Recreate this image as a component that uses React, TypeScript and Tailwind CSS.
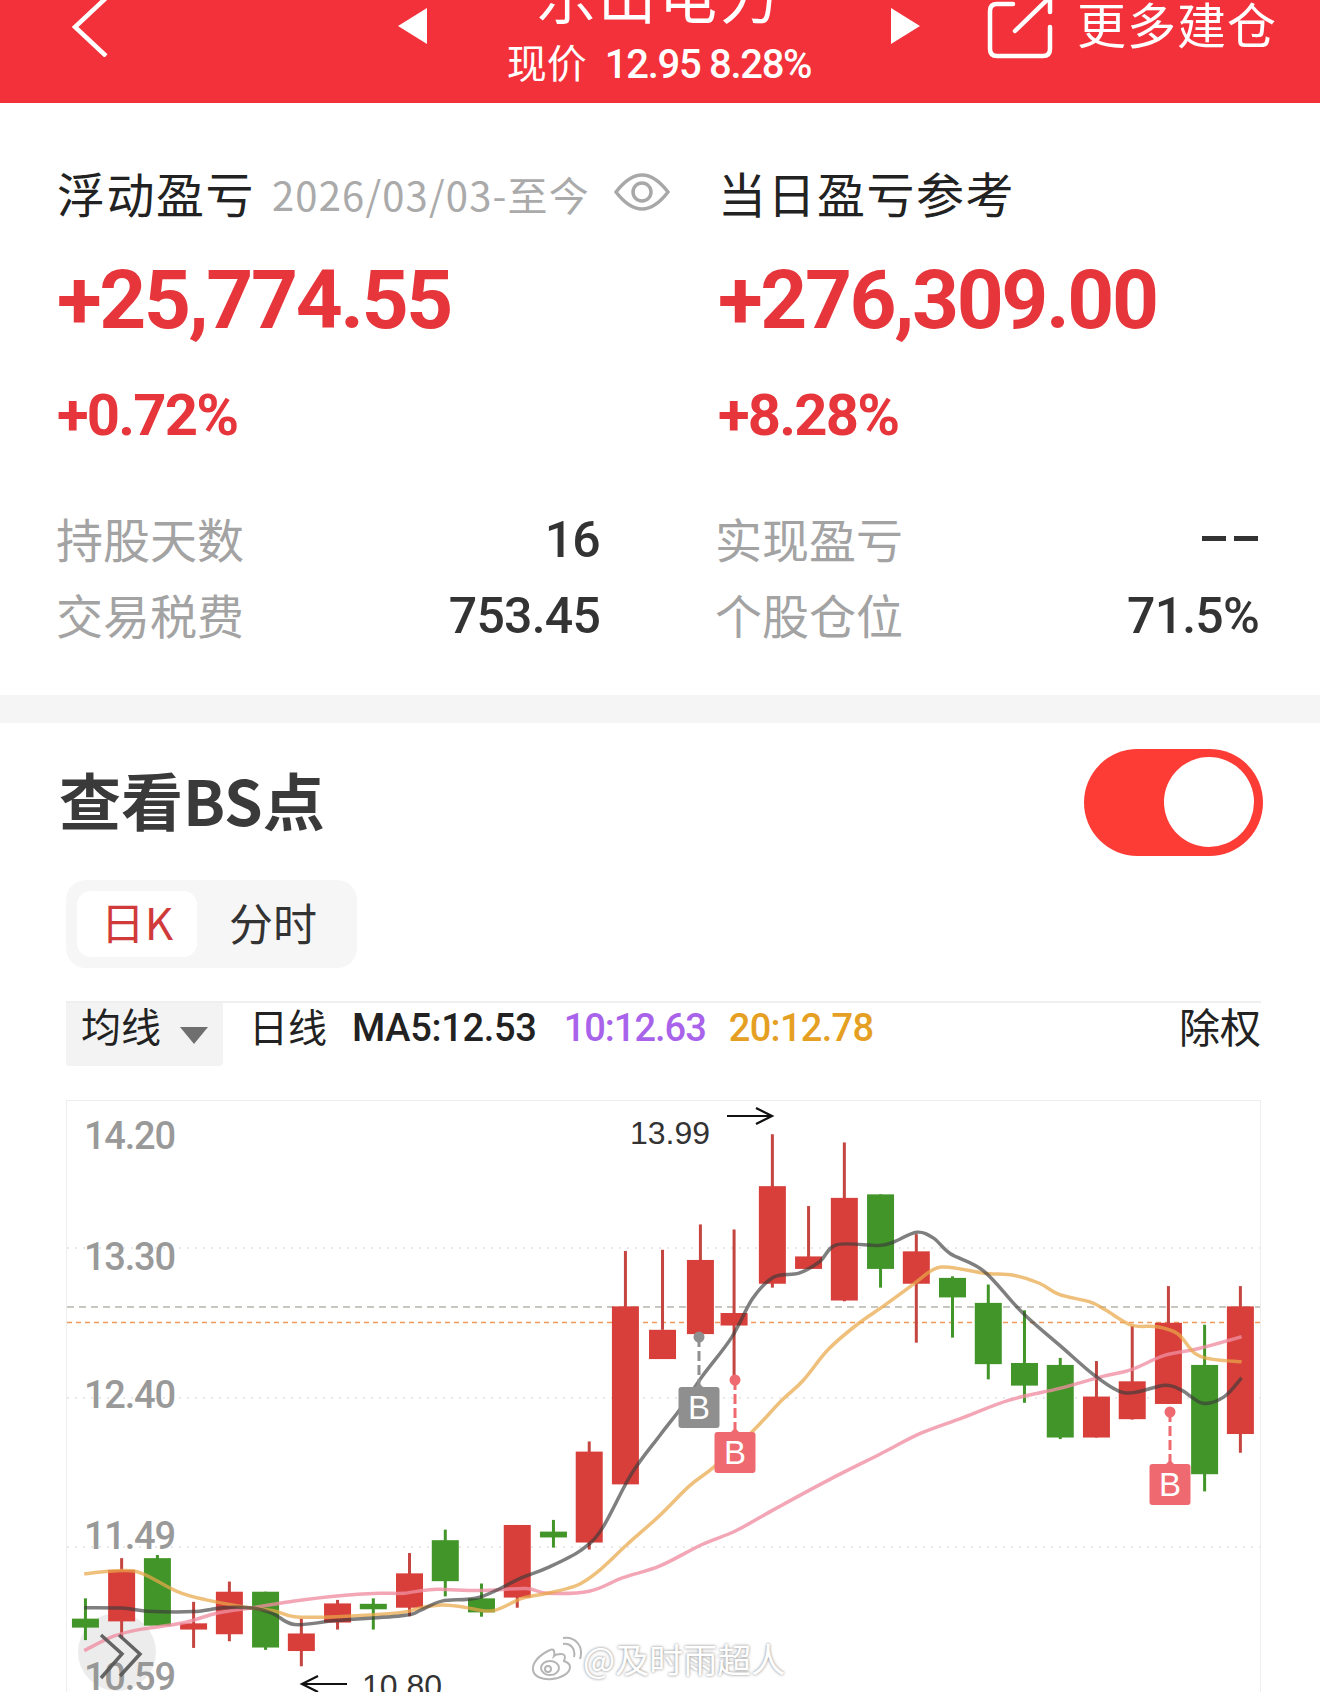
const L = (x: number, y: number): [number, number] => [x / 2.376, 1080 + y / 2.562];
const R = (x: number, y: number): [number, number] => [660 + x / 2.376, 1080 + y / 2.562];

type Candle = { x: number; top: number; bottom: number; hi: number; lo: number; up: boolean };

// measured from the left and right half of the chart, zoom coordinates
const leftCandles: [number, number, number, number, number, boolean][] = [
  [203, 1380, 1403, 1328, 1435, false],
  [289, 1255, 1387, 1225, 1430, true],
  [374, 1225, 1398, 1217, 1398, false],
  [460, 1392, 1408, 1337, 1455, true],
  [545, 1311, 1420, 1285, 1438, true],
  [631, 1311, 1454, 1311, 1460, false],
  [716, 1418, 1463, 1380, 1502, true],
  [802, 1341, 1390, 1332, 1408, true],
  [887, 1342, 1356, 1328, 1408, false],
  [973, 1264, 1352, 1212, 1374, true],
  [1058, 1179, 1284, 1152, 1323, false],
  [1144, 1328, 1364, 1290, 1375, false],
  [1229, 1140, 1326, 1140, 1352, true],
  [1315, 1157, 1172, 1127, 1198, false],
  [1400, 952, 1185, 926, 1203, true],
  [1486, 580, 1036, 438, 1036, true],
];
const rightCandles: [number, number, number, number, number, boolean][] = [
  [6, 640, 715, 435, 640, true],
  [96, 461, 651, 370, 651, true],
  [176, 597, 629, 383, 770, true],
  [267, 272, 522, 139, 532, true],
  [353, 452, 484, 323, 484, true],
  [438, 302, 565, 160, 567, true],
  [524, 293, 484, 293, 532, false],
  [609, 439, 522, 395, 673, true],
  [695, 507, 557, 503, 660, false],
  [780, 571, 728, 524, 767, false],
  [866, 725, 783, 590, 827, false],
  [951, 730, 916, 712, 920, false],
  [1037, 811, 916, 720, 916, true],
  [1122, 772, 869, 630, 870, true],
  [1208, 622, 830, 528, 830, true],
  [1294, 730, 1010, 627, 1054, false],
  [1379, 580, 907, 528, 955, true],
];

const toCandle = (conv: typeof L) => (c: [number, number, number, number, number, boolean]): Candle => ({
  x: conv(c[0], 0)[0],
  top: conv(0, c[1])[1],
  bottom: conv(0, c[2])[1],
  hi: conv(0, c[3])[1],
  lo: conv(0, c[4])[1],
  up: c[5],
});

const candles = [...leftCandles.map(toCandle(L)), ...rightCandles.map(toCandle(R))];

const ma5 = [
  ...[[200, 1352], [290, 1353], [350, 1361], [460, 1362], [530, 1352], [600, 1353], [650, 1368], [700, 1395], [800, 1385], [960, 1372], [1000, 1358], [1050, 1335], [1140, 1325], [1240, 1275], [1300, 1250], [1380, 1205], [1430, 1150], [1500, 1010]].map(([x, y]) => L(x, y)),
  ...[[0, 910], [50, 840], [100, 760], [170, 660], [220, 560], [270, 505], [330, 495], [380, 465], [420, 422], [520, 424], [555, 415], [610, 390], [650, 405], [690, 445], [770, 490], [860, 595], [950, 680], [1030, 755], [1090, 797], [1130, 800], [1200, 782], [1240, 795], [1290, 828], [1340, 812], [1382, 763]].map(([x, y]) => R(x, y)),
];
const ma10 = [
  ...[[200, 1265], [290, 1257], [340, 1265], [420, 1310], [490, 1332], [580, 1350], [650, 1360], [700, 1375], [800, 1375], [950, 1365], [1000, 1352], [1050, 1345], [1100, 1350], [1170, 1360], [1240, 1328], [1300, 1315], [1370, 1295], [1420, 1260], [1490, 1190]].map(([x, y]) => L(x, y)),
  ...[[0, 1115], [70, 1040], [130, 990], [220, 900], [290, 820], [340, 770], [400, 690], [470, 625], [530, 580], [600, 525], [650, 485], [690, 480], [770, 495], [840, 500], [900, 520], [950, 550], [1020, 568], [1060, 590], [1120, 628], [1180, 632], [1230, 650], [1270, 700], [1310, 715], [1382, 722]].map(([x, y]) => R(x, y)),
];
const ma20 = [
  ...[[200, 1462], [270, 1425], [330, 1408], [430, 1392], [520, 1365], [600, 1352], [700, 1335], [800, 1322], [900, 1315], [960, 1315], [1030, 1305], [1140, 1308], [1250, 1303], [1300, 1315], [1400, 1310], [1480, 1275]].map(([x, y]) => L(x, y)),
  ...[[0, 1245], [100, 1190], [180, 1155], [280, 1095], [400, 1025], [520, 960], [620, 905], [720, 865], [830, 820], [950, 790], [1050, 760], [1120, 742], [1200, 705], [1280, 688], [1382, 658]].map(([x, y]) => R(x, y)),
];

function smooth(pts: [number, number][]) {
  let d = `M${pts[0][0].toFixed(1)} ${pts[0][1].toFixed(1)}`;
  for (let i = 0; i < pts.length - 1; i++) {
    const p0 = pts[i - 1] || pts[i];
    const p1 = pts[i];
    const p2 = pts[i + 1];
    const p3 = pts[i + 2] || p2;
    const c1x = p1[0] + (p2[0] - p0[0]) / 6;
    const c1y = p1[1] + (p2[1] - p0[1]) / 6;
    const c2x = p2[0] - (p3[0] - p1[0]) / 6;
    const c2y = p2[1] - (p3[1] - p1[1]) / 6;
    d += `C${c1x.toFixed(1)} ${c1y.toFixed(1)} ${c2x.toFixed(1)} ${c2y.toFixed(1)} ${p2[0].toFixed(1)} ${p2[1].toFixed(1)}`;
  }
  return d;
}

const axisLabels = [
  { y: 1149, text: "14.20" },
  { y: 1270, text: "13.30" },
  { y: 1408, text: "12.40" },
  { y: 1549, text: "11.49" },
  { y: 1690, text: "10.59" },
];

function BMarker({ x, dotY, boxY, color }: { x: number; dotY: number; boxY: number; color: string }) {
  return (
    <g>
      <line x1={x} x2={x} y1={dotY} y2={boxY} stroke={color} strokeWidth="3" strokeDasharray="10 4" />
      <circle cx={x} cy={dotY} r="5.5" fill={color} />
      <path d={`M${x - 5} ${boxY + 1} L${x} ${boxY - 4} L${x + 5} ${boxY + 1} Z`} fill={color} />
      <rect x={x - 20.5} y={boxY} width="41" height="41" rx="3" fill={color} />
      <text
        x={x}
        y={boxY + 32}
        textAnchor="middle"
        fontSize="33"
        fill="#fff"
        fontFamily="Liberation Sans, sans-serif"
      >
        B
      </text>
    </g>
  );
}

function KChart() {
  return (
    <svg viewBox="66 1100 1195 592" className="block w-[1195px] h-[592px]">
      {[1248, 1398, 1547].map((y) => (
        <line key={y} x1="67" x2="1260" y1={y} y2={y} stroke="#e9e9e9" strokeWidth="2" strokeDasharray="2 6" />
      ))}
      <line x1="67" x2="1260" y1="1307" y2="1307" stroke="#b5b5aa" strokeWidth="1.5" strokeDasharray="7 5" />
      <line x1="67" x2="1260" y1="1322.5" y2="1322.5" stroke="#ee9a5c" strokeWidth="1.5" strokeDasharray="5 4" />

      {axisLabels.map((a) => (
        <text key={a.text} x="84" y={a.y} fontSize="38" fontWeight="500" fill="#999" fontFamily="Roboto, sans-serif" textLength="92">
          {a.text}
        </text>
      ))}

      <circle cx="117" cy="1652" r="39" fill="#8f8f8f" fillOpacity="0.17" />

      {candles.map((c, i) => {
        const color = c.up ? "#d83f3b" : "#429629";
        return (
          <g key={i}>
            <rect x={c.x - 1.5} y={c.hi} width="3" height={c.lo - c.hi} fill={c.up ? "#c54541" : color} />
            <rect x={c.x - 13.5} y={c.top} width="27" height={c.bottom - c.top} fill={color} />
          </g>
        );
      })}

      <path d={smooth(ma20)} fill="none" stroke="#f08da0" strokeOpacity="0.78" strokeWidth="3.5" />
      <path d={smooth(ma10)} fill="none" stroke="#e9a84a" strokeOpacity="0.72" strokeWidth="3.5" />
      <path d={smooth(ma5)} fill="none" stroke="#3a3a3a" strokeOpacity="0.65" strokeWidth="3.5" />

      <BMarker x={699} dotY={1337} boxY={1387} color="#8f8f8f" />
      <BMarker x={735} dotY={1380} boxY={1432} color="#ef6a70" />
      <BMarker x={1170} dotY={1412} boxY={1464} color="#ef6a70" />

      <text x="630" y="1144" fontSize="32" fill="#333" fontFamily="Liberation Sans, sans-serif">
        13.99
      </text>
      <path d="M727 1116H771M756 1108L772 1116L756 1124" fill="none" stroke="#111" strokeWidth="2.2" />
      <text x="362" y="1697" fontSize="32" fill="#333" fontFamily="Liberation Sans, sans-serif">
        10.80
      </text>
      <path d="M347 1684H303M318 1676L302 1684L318 1692" fill="none" stroke="#111" strokeWidth="2.2" />

      <path
        d="M119 1635L140 1654L120 1676M101 1635L122 1654L101 1678"
        fill="none"
        stroke="#555"
        strokeOpacity="0.9"
        strokeWidth="3.5"
      />
    </svg>
  );
}

function StatRow({ label, value, dashes, labelClass }: { label: string; value?: string; dashes?: boolean; labelClass: string }) {
  return (
    <div className="flex items-center justify-between h-[60px]">
      <span className={`text-[47px] leading-[60px] -mt-[4px] text-[#a3a3a3] ${labelClass}`}>{label}</span>
      {dashes ? (
        <span className="flex gap-[8px] pr-[1px] -mt-[3px]">
          <span className="block w-[24px] h-[5px] bg-[#333]" />
          <span className="block w-[24px] h-[5px] bg-[#333]" />
        </span>
      ) : (
        <span className="font-['Roboto',sans-serif] font-medium text-[50px] leading-[60px] tracking-[-0.8px] text-[#333]">{value}</span>
      )}
    </div>
  );
}

export default function App() {
  return (
    <div className="relative w-[1320px] h-[1692px] overflow-hidden bg-white font-['Noto_Sans_CJK_SC',sans-serif]">
      <header className="grid grid-cols-[398px_522px_400px] h-[103px] overflow-hidden bg-[#f2313b] text-white">
        <div className="pl-[71px]">
          <svg width="38" height="60" viewBox="0 0 38 60" fill="none" stroke="#fff" strokeWidth="4.5" className="-mt-[3px]">
            <path d="M35 1L4 30L35 59" />
          </svg>
        </div>
        <div className="flex justify-between">
          <svg width="30" height="36" viewBox="0 0 30 36" className="mt-[8px]">
            <path d="M29 0V36L0 18Z" fill="#fff" />
          </svg>
          <div className="flex flex-col items-center">
            <div className="text-[58px] leading-[60px] -mt-[36px] tracking-[3px] whitespace-nowrap">乐山电力</div>
            <div className="mt-[11px] flex items-baseline text-[40px] leading-[52px] whitespace-nowrap">
              现价
              <span className="font-['Roboto',sans-serif] font-medium text-[40px] tracking-[-1.3px] ml-[18px]">12.95 8.28%</span>
            </div>
          </div>
          <svg width="30" height="36" viewBox="0 0 30 36" className="mt-[8px]">
            <path d="M1 0V36L30 18Z" fill="#fff" />
          </svg>
        </div>
        <div className="flex items-start pl-[67px]">
          <svg width="68" height="60" viewBox="0 0 68 60" fill="none" stroke="#fff" strokeWidth="4.5" strokeLinecap="round" className="shrink-0">
            <path d="M26 4H10Q3 4 3 11V49Q3 56 10 56H56Q63 56 63 49V27" />
            <path d="M28 31L62 -2" />
            <path d="M63 -4V12" />
          </svg>
          <span className="ml-[22px] -mt-[5px] text-[49px] leading-[56px] tracking-[1px] whitespace-nowrap">更多建仓</span>
        </div>
      </header>

      <section className="grid grid-cols-[661px_1fr] pl-[57px] pr-[61px] pt-[62px] h-[592px]">
        <div className="w-[543px]">
          <div className="flex items-center h-[60px] pb-[6px] whitespace-nowrap">
            <span className="text-[48px] leading-[54px] tracking-[1.5px] text-[#222]">浮动盈亏</span>
            <span className="ml-[17px] mt-[4px] text-[40px] leading-[54px] tracking-[1.15px] text-[#aaa]">2026/03/03-至今</span>
            <svg width="56" height="40" viewBox="0 0 56 40" fill="none" stroke="#a8a8a8" strokeWidth="3.5" className="ml-[24px] shrink-0">
              <path d="M2 20C12 7 20 3 28 3S44 7 54 20C44 33 36 37 28 37S12 33 2 20Z" />
              <circle cx="28" cy="20" r="9" />
            </svg>
          </div>
          <div className="mt-[30px] font-['Roboto',sans-serif] font-bold text-[82px] leading-[90px] tracking-[-2.4px] text-[#e6363c]">+25,774.55</div>
          <div className="mt-[40px] font-['Roboto',sans-serif] font-bold text-[58px] leading-[60px] tracking-[-1.8px] text-[#e6363c]">+0.72%</div>
          <div className="mt-[65px]">
            <StatRow label="持股天数" value="16" labelClass="-ml-[1px]" />
            <div className="mt-[16px]">
              <StatRow label="交易税费" value="753.45" labelClass="-ml-[1px]" />
            </div>
          </div>
        </div>
        <div>
          <div className="h-[60px] text-[48px] leading-[54px] tracking-[1.5px] text-[#222] whitespace-nowrap">当日盈亏参考</div>
          <div className="mt-[30px] font-['Roboto',sans-serif] font-bold text-[82px] leading-[90px] tracking-[-2.4px] text-[#e6363c]">+276,309.00</div>
          <div className="mt-[40px] font-['Roboto',sans-serif] font-bold text-[58px] leading-[60px] tracking-[-1.8px] text-[#e6363c]">+8.28%</div>
          <div className="mt-[65px]">
            <StatRow label="实现盈亏" dashes labelClass="-ml-[3px]" />
            <div className="mt-[16px]">
              <StatRow label="个股仓位" value="71.5%" labelClass="-ml-[3px]" />
            </div>
          </div>
        </div>
      </section>

      <div className="h-[28px] bg-[#f5f5f5]" />

      <section className="px-[59px] pt-[26px]">
        <div className="flex items-center justify-between h-[107px]">
          <h2 className="text-[62px] leading-[72px] pb-[8px] font-bold text-[#3a3a3a] whitespace-nowrap">查看BS点</h2>
          <div className="relative w-[179px] h-[107px] -mr-[2px] rounded-full bg-[#fd3c36]">
            <div className="absolute right-[9px] top-[8px] w-[90px] h-[90px] rounded-full bg-white" />
          </div>
        </div>
      </section>

      <div className="ml-[66px] mt-[24px] w-[291px] h-[88px] flex items-center pl-[11px] rounded-[20px] bg-[#f6f6f6] text-[44px]">
        <div className="w-[120px] h-[66px] pb-[6px] flex items-center justify-center rounded-[14px] bg-white text-[#d13a3a] leading-none">日K</div>
        <div className="ml-[32px] pb-[5px] text-[#333] leading-none whitespace-nowrap">分时</div>
      </div>

      <div className="mx-[66px] mt-[33px] w-[1195px] h-[65px] border-t-2 border-[#efefef] flex items-start text-[#222] whitespace-nowrap">
        <div className="flex items-start w-[157px] h-[63px] pl-[15px] rounded-b-[4px] bg-[#f3f3f3]">
          <span className="text-[40px] leading-[44px]">均线</span>
          <svg width="28" height="17" viewBox="0 0 28 17" className="ml-[19px] mt-[24px]">
            <path d="M0 0H28L14 17Z" fill="#6f6f6f" />
          </svg>
        </div>
        <span className="ml-[26px] text-[39px] leading-[44px]">日线</span>
        <span className="ml-[25px] font-['Roboto',sans-serif] font-medium text-[38px] leading-[50px] tracking-[-0.3px]">MA5:12.53</span>
        <span className="ml-[27px] font-['Roboto',sans-serif] font-medium text-[38px] leading-[50px] tracking-[-1px] text-[#a963ea]">10:12.63</span>
        <span className="ml-[23px] font-['Roboto',sans-serif] font-medium text-[38px] leading-[50px] tracking-[-0.7px] text-[#e5a023]">20:12.78</span>
        <span className="ml-auto text-[41px] leading-[44px]">除权</span>
      </div>

      <div className="ml-[66px] mt-[34px] w-[1195px] h-[592px] shadow-[inset_0_1px_0_#eeeeee,inset_1px_0_0_#eeeeee,inset_-1px_0_0_#eeeeee]">
        <KChart />
      </div>

      <div className="absolute left-[530px] top-[1636px] flex items-center gap-[1px] text-[34px] leading-[44px] text-white [text-shadow:0_0_3px_#7a7a7a] whitespace-nowrap">
        <svg width="52" height="46" viewBox="0 0 52 46" fill="#fff" stroke="#b5b5b5" strokeWidth="2" className="shrink-0">
          <path d="M20 14C9 19 2 27 3 34C4 41 13 44 22 43C32 42 40 37 40 31C40 27 36 26 34 25C36 21 35 18 31 18C28 18 25 19 24 20C25 16 24 12 20 14Z" />
          <ellipse cx="20" cy="32" rx="9" ry="7" />
          <circle cx="18" cy="33" r="3" />
          <path d="M33 8C40 7 46 12 44 21M33 2C45 0 54 10 50 23" fill="none" />
        </svg>
        <span>@及时雨超人</span>
      </div>
    </div>
  );
}
